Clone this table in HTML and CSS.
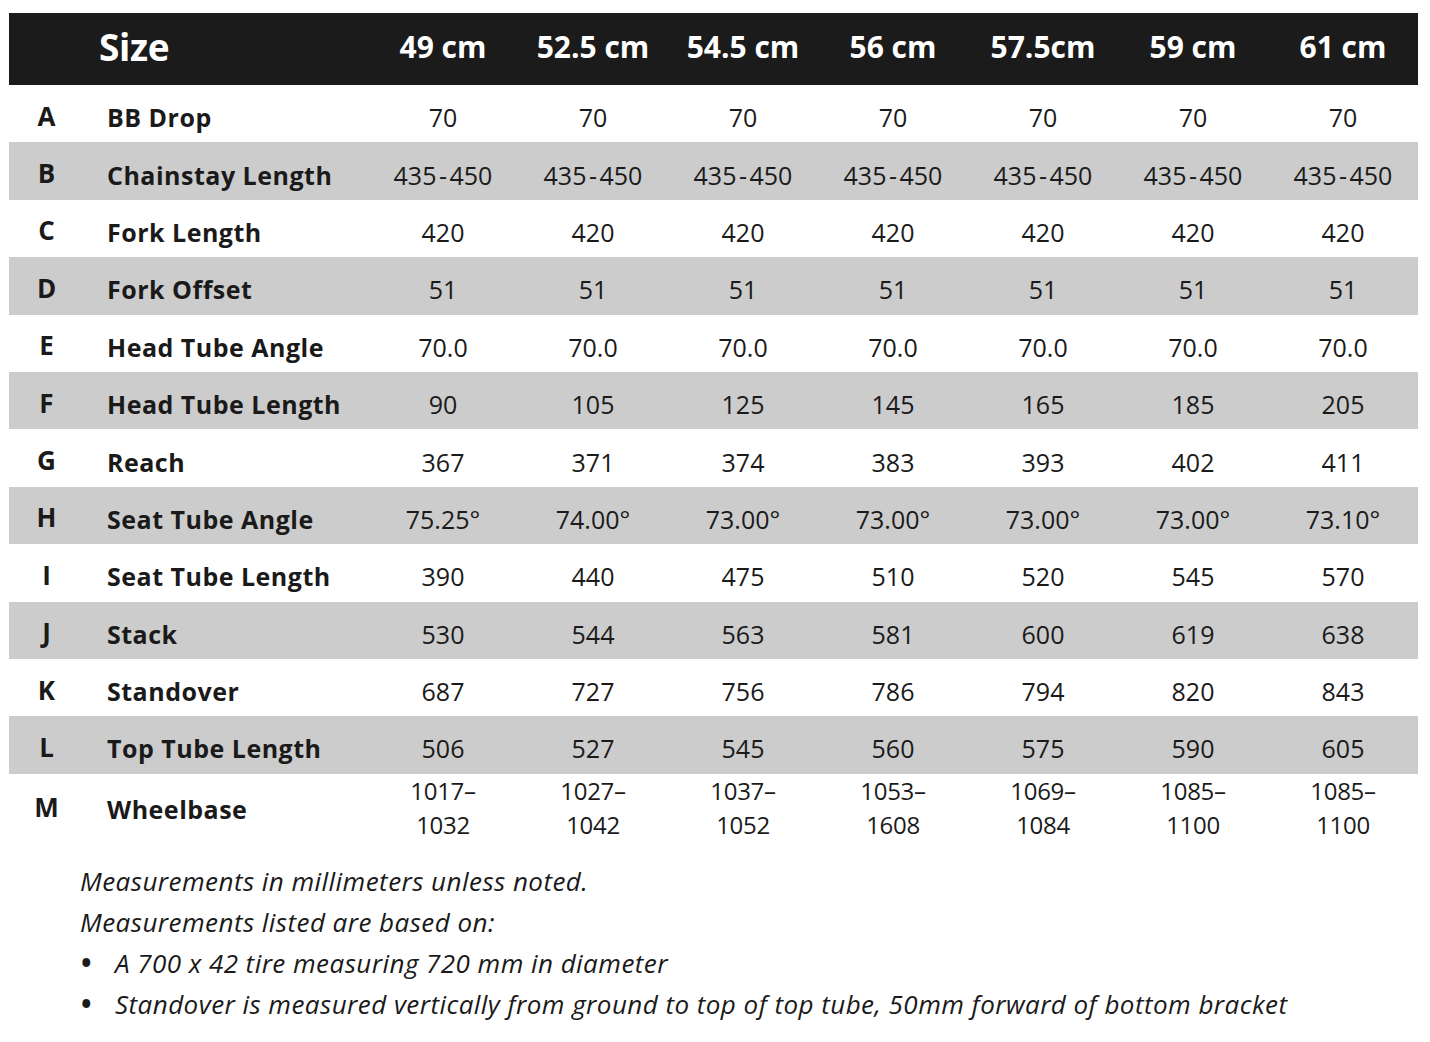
FILE: index.html
```html
<!DOCTYPE html>
<html lang="en">
<head>
<meta charset="utf-8">
<title>Geometry</title>
<link rel="stylesheet" href="styles.css">
</head>
<body>
<table class="geo">
  <colgroup>
    <col class="c-letter"><col class="c-label">
    <col class="c-val"><col class="c-val"><col class="c-val"><col class="c-val"><col class="c-val"><col class="c-val"><col class="c-val">
  </colgroup>
  <thead>
    <tr>
      <th></th><th class="size">Size</th>
      <th>49 cm</th><th>52.5 cm</th><th>54.5 cm</th><th>56 cm</th><th>57.5cm</th><th>59 cm</th><th>61 cm</th>
    </tr>
  </thead>
  <tbody>
    <tr><td class="l">A</td><td class="n">BB Drop</td><td>70</td><td>70</td><td>70</td><td>70</td><td>70</td><td>70</td><td>70</td></tr>
    <tr class="g"><td class="l">B</td><td class="n">Chainstay Length</td><td>435&#8202;-&#8202;450</td><td>435&#8202;-&#8202;450</td><td>435&#8202;-&#8202;450</td><td>435&#8202;-&#8202;450</td><td>435&#8202;-&#8202;450</td><td>435&#8202;-&#8202;450</td><td>435&#8202;-&#8202;450</td></tr>
    <tr><td class="l">C</td><td class="n">Fork Length</td><td>420</td><td>420</td><td>420</td><td>420</td><td>420</td><td>420</td><td>420</td></tr>
    <tr class="g"><td class="l">D</td><td class="n">Fork Offset</td><td>51</td><td>51</td><td>51</td><td>51</td><td>51</td><td>51</td><td>51</td></tr>
    <tr><td class="l">E</td><td class="n">Head Tube Angle</td><td>70.0</td><td>70.0</td><td>70.0</td><td>70.0</td><td>70.0</td><td>70.0</td><td>70.0</td></tr>
    <tr class="g"><td class="l">F</td><td class="n">Head Tube Length</td><td>90</td><td>105</td><td>125</td><td>145</td><td>165</td><td>185</td><td>205</td></tr>
    <tr><td class="l">G</td><td class="n">Reach</td><td>367</td><td>371</td><td>374</td><td>383</td><td>393</td><td>402</td><td>411</td></tr>
    <tr class="g"><td class="l">H</td><td class="n">Seat Tube Angle</td><td>75.25°</td><td>74.00°</td><td>73.00°</td><td>73.00°</td><td>73.00°</td><td>73.00°</td><td>73.10°</td></tr>
    <tr><td class="l">I</td><td class="n">Seat Tube Length</td><td>390</td><td>440</td><td>475</td><td>510</td><td>520</td><td>545</td><td>570</td></tr>
    <tr class="g"><td class="l">J</td><td class="n">Stack</td><td>530</td><td>544</td><td>563</td><td>581</td><td>600</td><td>619</td><td>638</td></tr>
    <tr><td class="l">K</td><td class="n">Standover</td><td>687</td><td>727</td><td>756</td><td>786</td><td>794</td><td>820</td><td>843</td></tr>
    <tr class="g"><td class="l">L</td><td class="n">Top Tube Length</td><td>506</td><td>527</td><td>545</td><td>560</td><td>575</td><td>590</td><td>605</td></tr>
    <tr class="tall"><td class="l">M</td><td class="n">Wheelbase</td><td>1017–<br>1032</td><td>1027–<br>1042</td><td>1037–<br>1052</td><td>1053–<br>1608</td><td>1069–<br>1084</td><td>1085–<br>1100</td><td>1085–<br>1100</td></tr>
  </tbody>
</table>
<div class="notes">
  <p>Measurements in millimeters unless noted.</p>
  <p>Measurements listed are based on:</p>
  <ul>
    <li>A 700 x 42 tire measuring 720 mm in diameter</li>
    <li>Standover is measured vertically from ground to top of top tube, 50mm forward of bottom bracket</li>
  </ul>
</div>
</body>
</html>
```
FILE: styles.css
```css
html, body {
  margin: 0;
  padding: 0;
  background: #ffffff;
}
body {
  padding: 13px 0 0 9px;
  font-family: "Open Sans", "Liberation Sans", sans-serif;
  color: #1a1a1a;
}
.geo {
  border-collapse: collapse;
  table-layout: fixed;
  width: 1409px;
}
.c-letter { width: 75px; }
.c-label { width: 284px; }
.c-val { width: 150px; }
.geo th, .geo td {
  padding: 0;
  text-align: center;
  vertical-align: middle;
}
.geo thead tr {
  background: #1b1b1b;
  height: 72px;
}
.geo th {
  color: #ffffff;
  font-weight: 700;
  font-size: 30px;
  line-height: 40px;
  padding-bottom: 4px;
}
.geo th.size {
  text-align: left;
  padding-left: 15px;
  font-size: 37px;
  letter-spacing: -0.3px;
}
.geo tbody tr {
  height: 57.4px;
}
.geo tbody tr.g {
  background: #cccccc;
}
.geo tbody tr.tall {
  height: 68px;
}
.geo td {
  font-size: 25px;
  padding-top: 7px;
  line-height: 30px;
}
.geo td.l {
  font-weight: 700;
  font-size: 26px;
  padding-top: 4px;
}
.geo td.n {
  text-align: left;
  padding-left: 23px;
  font-weight: 700;
  font-size: 25px;
  letter-spacing: 0.5px;
}
.geo tr.tall td {
  line-height: 34px;
  padding-top: 0;
  padding-bottom: 4px;
}
.geo tr.tall td.l {
  padding-bottom: 6px;
}
.geo tr.tall td.n {
  padding-bottom: 2px;
}
.geo tr.tall td:not(.l):not(.n) {
  font-size: 24px;
  letter-spacing: -0.3px;
}
.notes {
  padding: 15px 0 0 71px;
  font-style: italic;
  font-size: 26px;
  letter-spacing: 0.45px;
  line-height: 41px;
}
.notes p, .notes ul {
  margin: 0;
}
.notes ul {
  padding: 0;
  list-style: none;
}
.notes li::before {
  content: "•";
  display: inline-block;
  width: 34px;
  padding-left: 1px;
  font-style: normal;
  font-weight: 700;
  font-size: 28px;
  line-height: 20px;
}
```
